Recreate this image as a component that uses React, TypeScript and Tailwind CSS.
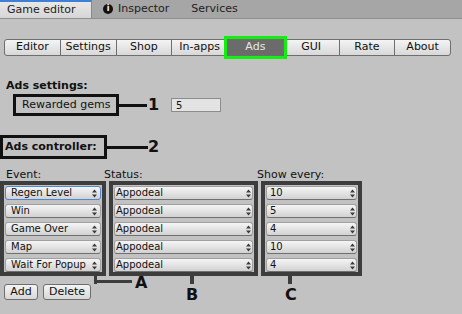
import React from "react";

const font = { fontFamily: '"DejaVu Sans", "Liberation Sans", sans-serif' };

function Arrows() {
  return (
    <svg width="5" height="9" viewBox="0 0 5 9" className="shrink-0">
      <polygon points="0,3.5 2.5,0.5 5,3.5" fill="#3a3a3a" />
      <polygon points="0,5.5 2.5,8.5 5,5.5" fill="#3a3a3a" />
    </svg>
  );
}

function Popup({ text, pl, pr, focused }: { text: string; pl: string; pr: string; focused?: boolean }) {
  return (
    <div
      className={`h-[14px] flex items-center justify-between rounded-[3px] border bg-gradient-to-b from-[#f5f5f5] to-[#d2d2d2] text-[10px] leading-none text-[#111] ${pl} ${pr} ${
        focused ? "border-[#4f86d6]" : "border-[#a0a0a0] border-b-[#707070]"
      }`}
    >
      <span>{text}</span>
      <Arrows />
    </div>
  );
}

function Column({ items, pl, pr, width, first }: { items: string[]; pl: string; pr: string; width: string; first?: boolean }) {
  return (
    <div className={`border-4 border-[#3d3d3d] ${width} flex flex-col gap-[4px] pt-[1px] px-[1px]`}>
      {items.map((t, i) => (
        <Popup key={i} text={t} pl={pl} pr={pr} focused={first && i === 0} />
      ))}
    </div>
  );
}

export default function App() {
  const tabs = ["Editor", "Settings", "Shop", "In-apps", "Ads", "GUI", "Rate", "About"];
  return (
    <div className="w-[462px] h-[314px] bg-[#c2c2c2] text-[11px] text-[#111] overflow-hidden" style={font}>
      {/* window tab bar */}
      <div className="h-[19px] bg-[#a6a6a6] border-b border-[#8f8f8f] flex items-stretch">
        <div className="w-[92px] border-t-2 border-[#3f7fd6] bg-gradient-to-b from-[#e8e8e8] to-[#d6d6d6] border-r border-r-[#8a8a8a] flex items-center pl-[7px] text-[#222]">
          Game editor
        </div>
        <div className="flex items-center pl-[11px] gap-[5px] text-[#222]">
          <span className="w-[10px] h-[10px] rounded-full bg-[#111] text-white text-[8px] font-bold leading-none flex items-center justify-center">
            i
          </span>
          <span>Inspector</span>
        </div>
        <div className="flex items-center pl-[22px] text-[#222]">Services</div>
      </div>

      {/* section buttons */}
      <div className="mt-[20px] ml-[4px] w-[447px] h-[17px] flex">
        {tabs.map((t, i) => {
          const active = t === "Ads";
          return (
            <div
              key={t}
              className={`flex-1 flex items-center justify-center border border-[#6e6e6e] ${i > 0 ? "-ml-px" : ""} ${
                i === 0 ? "rounded-l-[3px]" : ""
              } ${i === tabs.length - 1 ? "rounded-r-[3px]" : ""} ${
                active
                  ? "relative z-10 bg-[#6b6b6b] text-[#e6e6e6] shadow-[0_0_0_3px_#12ee12]"
                  : "bg-gradient-to-b from-[#f4f4f4] to-[#d8d8d8] text-[#111]"
              }`}
            >
              {t}
            </div>
          );
        })}
      </div>

      {/* Ads settings */}
      <div className="mt-[23px] pl-[6px] font-bold leading-[13px]">Ads settings:</div>
      <div className="mt-[2px] flex items-center h-[22px]">
        <div className="ml-[13px] border-[3px] border-[#111] h-[22px] w-[106px] flex items-center pl-[6px]">Rewarded gems</div>
        <div className="w-[28px] h-[3px] bg-[#111]" />
        <div className="font-bold text-[16px] leading-none ml-[1px] w-[10px]">1</div>
        <div className="ml-[13px] w-[50px] h-[14px] border border-[#8c8c8c] bg-[#e3e3e3] flex items-center pl-[4px] text-[10px]">5</div>
      </div>

      {/* Ads controller */}
      <div className="mt-[19px] flex items-center h-[24px]">
        <div className="border-[3px] border-[#111] h-[24px] w-[107px] flex items-center pl-[2px] font-bold">Ads controller:</div>
        <div className="w-[41px] h-[3px] bg-[#111]" />
        <div className="font-bold text-[16px] leading-none">2</div>
      </div>

      {/* column labels */}
      <div className="mt-[10px] flex leading-[12px]">
        <div className="w-[104px] pl-[6px]">Event:</div>
        <div className="w-[153px]">Status:</div>
        <div>Show every:</div>
      </div>

      {/* columns */}
      <div className="relative">
        <div className="flex gap-[3px]">
          <Column
            width="w-[106px]"
            pl="pl-[5px]"
            pr="pr-[3px]"
            first
            items={["Regen Level", "Win", "Game Over", "Map", "Wait For Popup"]}
          />
          <Column
            width="w-[149px]"
            pl="pl-[1px]"
            pr="pr-[1px]"
            items={["Appodeal", "Appodeal", "Appodeal", "Appodeal", "Appodeal"]}
          />
          <Column width="w-[101px]" pl="pl-[3px]" pr="pr-[1px]" items={["10", "5", "4", "10", "4"]} />
        </div>

        {/* annotation connectors */}
        <div className="absolute left-[94px] top-[95px] w-[3px] h-[8px] bg-[#3d3d3d]" />
        <div className="absolute left-[94px] top-[99px] w-[38px] h-[3px] bg-[#3d3d3d]" />
        <div className="absolute left-[135px] top-[94px] font-bold text-[16px] leading-none">A</div>
        <div className="absolute left-[190px] top-[95px] w-[4px] h-[8px] bg-[#3d3d3d]" />
        <div className="absolute left-[186px] top-[106px] font-bold text-[16px] leading-none">B</div>
        <div className="absolute left-[288px] top-[95px] w-[4px] h-[8px] bg-[#3d3d3d]" />
        <div className="absolute left-[285px] top-[106px] font-bold text-[16px] leading-none">C</div>

        {/* add / delete */}
        <div className="mt-[8px] ml-[4px] flex gap-[5px]">
          <div className="w-[34px] h-[16px] rounded-[3px] border border-[#6e6e6e] bg-gradient-to-b from-[#f4f4f4] to-[#d8d8d8] flex items-center justify-center">
            Add
          </div>
          <div className="w-[48px] h-[16px] rounded-[3px] border border-[#6e6e6e] bg-gradient-to-b from-[#f4f4f4] to-[#d8d8d8] flex items-center justify-center">
            Delete
          </div>
        </div>
      </div>
    </div>
  );
}
